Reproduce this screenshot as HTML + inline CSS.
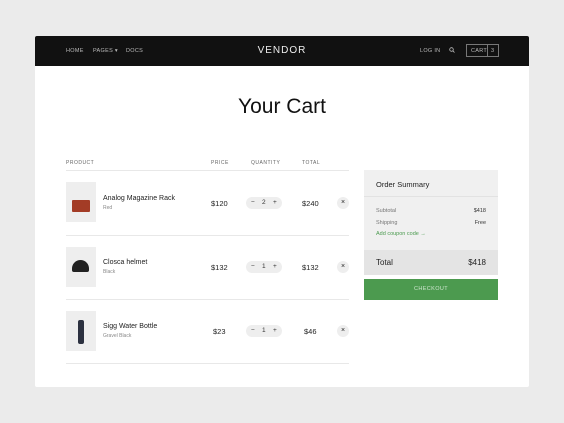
<!DOCTYPE html>
<html><head><style>
*{margin:0;padding:0;box-sizing:border-box}
body{width:564px;height:423px;background:#ebebeb;font-family:"Liberation Sans",sans-serif;position:relative;overflow:hidden;color:#222}
.card{position:absolute;left:35px;top:36px;width:494px;height:351px;background:#fff;border-radius:2px;overflow:hidden}
.hd{position:absolute;left:0;top:0;width:494px;height:30px;background:#111;color:#bbb;font-size:5.5px;letter-spacing:.3px}
.a{position:absolute;top:12px}
.logo{position:absolute;left:0;width:494px;text-align:center;top:9px;color:#eee;font-size:10px;letter-spacing:1px}
.cart{position:absolute;left:431px;top:8px;width:33px;height:13px;border:1px solid #777}
.cart span{position:absolute;top:3px}
h1{position:absolute;left:0;width:494px;text-align:center;top:59px;font-weight:400;font-size:21px;color:#111}
.t{position:absolute;font-size:5px;letter-spacing:.5px;color:#666}
.ln{position:absolute;left:31px;width:283px;height:1px;background:#e8e8e8}
.th{position:absolute;left:31px;width:30px;height:40px;background:#eee}
.n{position:absolute;left:68px;font-size:7px;color:#222}
.s{position:absolute;left:68px;font-size:5px;color:#888}
.p{position:absolute;font-size:7.5px;color:#222}
.q{position:absolute;left:211px;width:36px;height:12px;background:#eee;border-radius:6px;font-size:6.5px;color:#333}
.q span{position:absolute;top:2px}
.x{position:absolute;left:302px;width:12px;height:12px;background:#eee;border-radius:6px;font-size:7px;text-align:center;line-height:12px}
.sum{position:absolute;left:329px;top:134px;width:134px;height:105px;background:#f0f0f0}
.sum div{position:absolute}
</style></head><body>
<div class="card">
<div class="hd">
<span class="a" style="left:31px">HOME</span><span class="a" style="left:58px">PAGES ▾</span><span class="a" style="left:91px">DOCS</span>
<div class="logo">VENDOR</div>
<span class="a" style="left:385px">LOG IN</span>
<svg style="position:absolute;left:414px;top:11px" width="6" height="6" viewBox="0 0 6 6"><circle cx="2.5" cy="2.5" r="1.8" fill="none" stroke="#bbb" stroke-width=".8"/><path d="M3.8 3.8L5.5 5.5" stroke="#bbb" stroke-width=".8"/></svg>
<div class="cart"><span style="left:4px">CART</span><span style="left:20px;height:11px;top:0;border-left:1px solid #777"></span><span style="left:24px">3</span></div>
</div>
<h1>Your Cart</h1>
<span class="t" style="left:31px;top:124px">PRODUCT</span>
<span class="t" style="left:176px;top:124px">PRICE</span>
<span class="t" style="left:216px;top:124px">QUANTITY</span>
<span class="t" style="left:267px;top:124px">TOTAL</span>
<div class="ln" style="top:134px"></div>
<div class="ln" style="top:199px"></div>
<div class="ln" style="top:263px"></div>
<div class="ln" style="top:327px"></div>

<div class="th" style="top:146px"><div style="position:absolute;left:6px;top:18px;width:18px;height:12px;background:#a33c26;border-radius:1px"></div></div>
<div class="n" style="top:159px">Analog Magazine Rack</div><div class="s" style="top:169px">Red</div>
<div class="p" style="left:176px;top:163px">$120</div>
<div class="q" style="top:161px"><span style="left:5px">−</span><span style="left:16px">2</span><span style="left:27px">+</span></div>
<div class="p" style="left:267px;top:163px">$240</div>
<div class="x" style="top:161px">×</div>

<div class="th" style="top:211px"><div style="position:absolute;left:6px;top:13px;width:17px;height:12px;background:#222;border-radius:9px 9px 2px 2px"></div></div>
<div class="n" style="top:223px">Closca helmet</div><div class="s" style="top:233px">Black</div>
<div class="p" style="left:176px;top:227px">$132</div>
<div class="q" style="top:225px"><span style="left:5px">−</span><span style="left:16px">1</span><span style="left:27px">+</span></div>
<div class="p" style="left:267px;top:227px">$132</div>
<div class="x" style="top:225px">×</div>

<div class="th" style="top:275px"><div style="position:absolute;left:12px;top:9px;width:6px;height:24px;background:#2c3140;border-radius:2px"></div></div>
<div class="n" style="top:287px">Sigg Water Bottle</div><div class="s" style="top:297px">Gravel Black</div>
<div class="p" style="left:178px;top:291px">$23</div>
<div class="q" style="top:289px"><span style="left:5px">−</span><span style="left:16px">1</span><span style="left:27px">+</span></div>
<div class="p" style="left:269px;top:291px">$46</div>
<div class="x" style="top:289px">×</div>

<div class="sum">
<div style="left:12px;top:10px;font-size:7.5px;color:#222">Order Summary</div>
<div style="left:0;top:26px;width:134px;height:1px;background:#e2e2e2"></div>
<div style="left:12px;top:38px;font-size:5.5px;color:#777">Subtotal</div><div style="right:12px;top:38px;font-size:5.5px;color:#333">$418</div>
<div style="left:12px;top:50px;font-size:5.5px;color:#777">Shipping</div><div style="right:12px;top:50px;font-size:5.5px;color:#333">Free</div>
<div style="left:12px;top:61px;font-size:5.5px;color:#4a9a4e">Add coupon code →</div>
<div style="left:0;top:80px;width:134px;height:25px;background:#e4e4e4"></div>
<div style="left:12px;top:88px;font-size:8px;color:#222">Total</div><div style="right:12px;top:88px;font-size:8px;color:#222">$418</div>
</div>
<div style="position:absolute;left:329px;top:243px;width:134px;height:21px;background:#4c9a4f;color:#cfe6cf;font-size:5.5px;text-align:center;line-height:21px;letter-spacing:.4px">CHECKOUT</div>
</div>
</body></html>
